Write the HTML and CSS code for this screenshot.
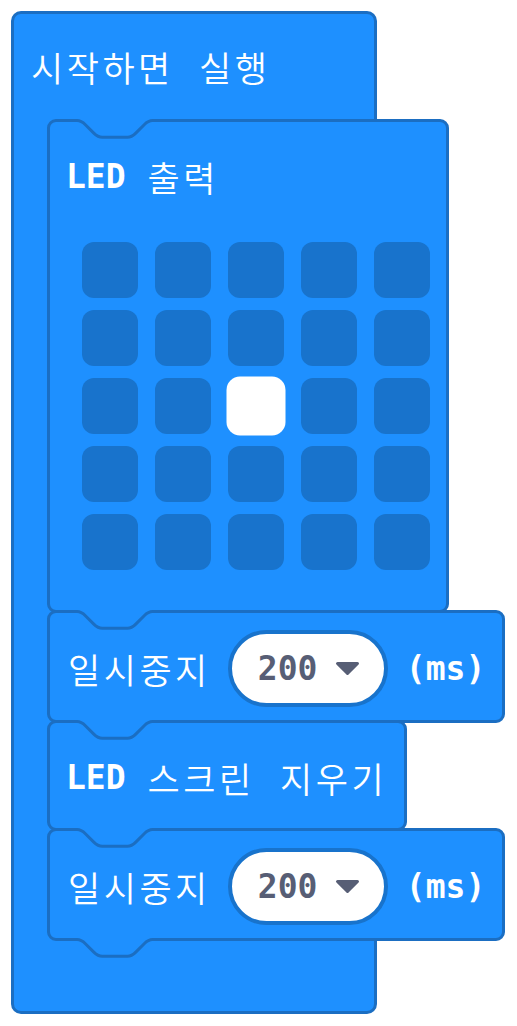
FILE: index.html
```html
<!DOCTYPE html>
<html lang="ko">
<head>
  <meta charset="UTF-8">
  <title>시작하면 실행</title>
  <link rel="stylesheet" href="styles.css">
</head>
<body>
  <svg class="defs" width="0" height="0">
    <symbol id="notch-shape" viewBox="0 0 100 22">
      <path fill="#1e90ff" d="M0 1.5 H7 c4.2 0 6.3 2.1 8.4 4.2 l8.4 8.4 c2.1 2.1 4.2 4.2 8.4 4.2 h25.2 c4.2 0 6.3 -2.1 8.4 -4.2 l8.4 -8.4 c2.1 -2.1 4.2 -4.2 8.4 -4.2 H100 V0 H0 Z"/>
      <path fill="none" stroke="#1b6ec2" stroke-width="3" d="M0 1.5 H7 c4.2 0 6.3 2.1 8.4 4.2 l8.4 8.4 c2.1 2.1 4.2 4.2 8.4 4.2 h25.2 c4.2 0 6.3 -2.1 8.4 -4.2 l8.4 -8.4 c2.1 -2.1 4.2 -4.2 8.4 -4.2 H100"/>
    </symbol>
  </svg>

  <div class="hat">
    <div class="hat-label"><span class="ko">시작하면 실행</span></div>

    <div class="stack">
      <div class="block block-led">
        <svg class="notch"><use href="#notch-shape"/></svg>
        <div class="label">
          <b>LED</b>
          <span class="ko">출력</span>
        </div>
        <div class="led-grid">
          <span class="led"></span><span class="led"></span><span class="led"></span><span class="led"></span><span class="led"></span>
          <span class="led"></span><span class="led"></span><span class="led"></span><span class="led"></span><span class="led"></span>
          <span class="led"></span><span class="led"></span><span class="led on"></span><span class="led"></span><span class="led"></span>
          <span class="led"></span><span class="led"></span><span class="led"></span><span class="led"></span><span class="led"></span>
          <span class="led"></span><span class="led"></span><span class="led"></span><span class="led"></span><span class="led"></span>
        </div>
      </div>

      <div class="block block-pause">
        <svg class="notch"><use href="#notch-shape"/></svg>
        <span class="ko">일시중지</span>
        <div class="dropdown">
          <b class="num">200</b>
          <svg class="caret" viewBox="0 0 25 15"><path d="M2.5 2.5 H22.5 L12.5 12.5 Z"/></svg>
        </div>
        <b class="unit">(ms)</b>
      </div>

      <div class="block block-clear">
        <svg class="notch"><use href="#notch-shape"/></svg>
        <b>LED</b>
        <span class="ko">스크린 지우기</span>
      </div>

      <div class="block block-pause">
        <svg class="notch"><use href="#notch-shape"/></svg>
        <span class="ko">일시중지</span>
        <div class="dropdown">
          <b class="num">200</b>
          <svg class="caret" viewBox="0 0 25 15"><path d="M2.5 2.5 H22.5 L12.5 12.5 Z"/></svg>
        </div>
        <b class="unit">(ms)</b>
        <svg class="notch tab"><use href="#notch-shape"/></svg>
      </div>
    </div>

    <div class="hat-foot"></div>
  </div>
</body>
</html>
```

FILE: styles.css
```css
body {
  margin: 0;
  padding: 11px;
  background: #fff;
  color: #fff;
  font-family: "DejaVu Sans Mono", "Noto Sans CJK KR", monospace;
  font-size: 33px;
}
.defs {
  position: absolute;
}
b {
  font-weight: bold;
  white-space: nowrap;
}
.ko {
  font-family: "Noto Sans CJK KR", sans-serif;
  font-size: 35px;
  font-weight: 350;
  letter-spacing: 3.5px;
  word-spacing: 12px;
  white-space: nowrap;
}

/* on start */
.hat {
  box-sizing: border-box;
  width: 366px;
  background: #1e90ff;
  border: 3px solid #1b6ec2;
  border-radius: 10px;
}
.hat-label {
  height: 105px;
  display: flex;
  align-items: center;
  padding-left: 17px;
}
.stack {
  margin-left: 33px;
}
.hat-foot {
  height: 70px;
}

/* statement blocks */
.block {
  position: relative;
  box-sizing: border-box;
  background: #1e90ff;
  border: 3px solid #1b6ec2;
  border-radius: 9px;
}
.block + .block {
  margin-top: -3px;
}
.notch {
  position: absolute;
  left: 20px;
  top: -3px;
  width: 100px;
  height: 22px;
}
.notch.tab {
  top: 100%;
}

.block-led {
  width: 402px;
  height: 494px;
  padding: 29px 0 0 16px;
}
.label {
  height: 50px;
  display: flex;
  align-items: center;
  gap: 22px;
}
.led-grid {
  display: grid;
  grid-template-columns: repeat(5, 56px);
  grid-auto-rows: 56px;
  gap: 12px 17px;
  margin: 41px 0 0 16px;
}
.led {
  background: #1873cc;
  border-radius: 12px;
}
.led.on {
  background: #fff;
  box-shadow: 0 0 0 1.5px #fff;
}

.block-pause {
  width: 458px;
  height: 113px;
  display: flex;
  align-items: center;
  padding: 4px 0 0 18px;
}
.dropdown {
  box-sizing: border-box;
  width: 160px;
  height: 77px;
  margin: 0 18px 0 17px;
  display: flex;
  align-items: center;
  gap: 18px;
  padding-left: 26px;
  background: #fff;
  border: 4px solid #1873cc;
  border-radius: 39px;
}
.num {
  color: #575e75;
}
.caret {
  width: 25px;
  height: 15px;
}
.caret path {
  fill: #575e75;
  stroke: #575e75;
  stroke-width: 3;
  stroke-linejoin: round;
}

.block-clear {
  width: 360px;
  height: 111px;
  display: flex;
  align-items: center;
  gap: 22px;
  padding: 4px 0 0 16px;
}
```
